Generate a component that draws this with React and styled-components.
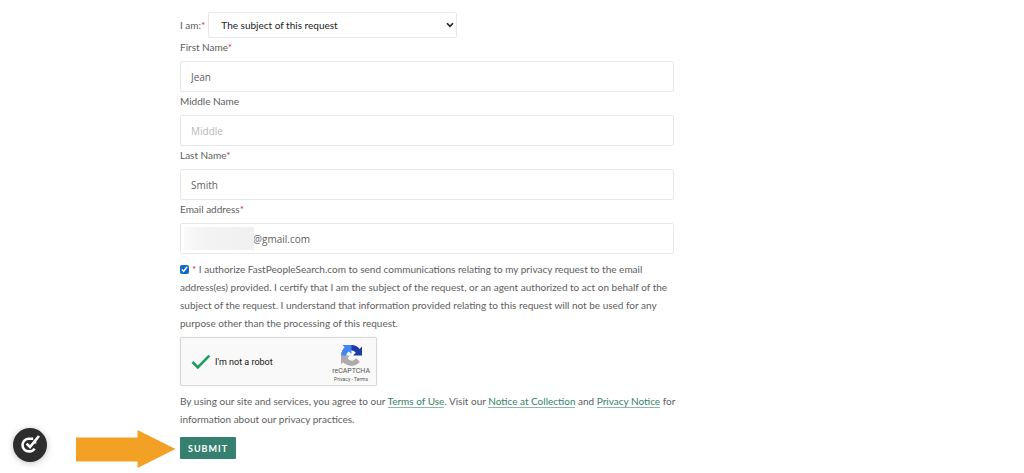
import React from 'react';
import styled, { createGlobalStyle } from 'styled-components';

const App = () => (
  <>
    <GlobalStyle />
    <Page>
      <Form onSubmit={(e) => e.preventDefault()}>
        <SelectRow>
          <label htmlFor="requester">
            I am:<Required>*</Required>
          </label>
          <SelectWrapper>
            <Select id="requester" defaultValue="subject">
              <option value="subject">The subject of this request</option>
              <option value="agent">An authorized agent</option>
            </Select>
            <Chevron viewBox="0 0 8 6" aria-hidden="true">
              <path d="M1 1.2 L4 4.3 L7 1.2" fill="none" stroke="#222" strokeWidth="1.6" />
            </Chevron>
          </SelectWrapper>
        </SelectRow>

        <Field id="first" label="First Name" required defaultValue="Jean" />
        <Field id="middle" label="Middle Name" placeholder="Middle" />
        <Field id="last" label="Last Name" required defaultValue="Smith" />
        <Field id="email" label="Email address" required defaultValue="@gmail.com" masked />

        <Consent htmlFor="consent">
          <Checkbox id="consent" type="checkbox" defaultChecked />
          <Required>*</Required> I authorize FastPeopleSearch.com to send communications relating to my privacy request to the email
          address(es) provided. I certify that I am the subject of the request, or an agent authorized to act on behalf of the
          subject of the request. I understand that information provided relating to this request will not be used for any
          purpose other than the processing of this request.
        </Consent>

        <Captcha>
          <Tick viewBox="0 0 20 16" aria-hidden="true">
            <path d="M1.5 8 L6.8 13.5 L18.3 1.7" fill="none" stroke="#1c9c60" strokeWidth="2.6" />
          </Tick>
          <CaptchaText>I'm not a robot</CaptchaText>
          <CaptchaBrand>
            <CaptchaLogo />
            <BrandName>reCAPTCHA</BrandName>
            <BrandLinks>
              <a href="#privacy">Privacy</a> - <a href="#terms">Terms</a>
            </BrandLinks>
          </CaptchaBrand>
        </Captcha>

        <Legal>
          By using our site and services, you agree to our <TextLink href="#terms-of-use">Terms of Use</TextLink>. Visit our{' '}
          <TextLink href="#notice">Notice at Collection</TextLink> and <TextLink href="#privacy-notice">Privacy Notice</TextLink> for
          information about our privacy practices.
        </Legal>

        <SubmitRow>
          <Arrow viewBox="0 0 100 38" aria-hidden="true">
            <path d="M0 7.5 H61.5 V0 L99.5 19 L61.5 38 V31.5 H0 Z" fill="#f2a124" />
          </Arrow>
          <SubmitButton type="submit">SUBMIT</SubmitButton>
        </SubmitRow>
      </Form>
    </Page>
    <ConsentBadge type="button" aria-label="Privacy preferences">
      <svg width="22" height="22" viewBox="0 0 22 22" fill="none" stroke="#fff" strokeWidth="2.6">
        <path d="M14.2 4.8 H9.8 A6.3 6.3 0 0 0 9.8 17.4 H10.6 A6 6 0 0 0 15.6 14.6" />
        <path d="M7.6 9.6 L11 13 L20 2" />
        <path d="M16 6.5 V9.6" />
      </svg>
    </ConsentBadge>
  </>
);

const Field = ({ id, label, required, masked, ...rest }) => (
  <FieldWrapper>
    <FieldLabel htmlFor={id}>
      {label}
      {required && <Required>*</Required>}
    </FieldLabel>
    <InputWrapper>
      <Input id={id} type="text" $masked={masked} {...rest} />
      {masked && <Mask />}
    </InputWrapper>
  </FieldWrapper>
);

const CaptchaLogo = () => (
  <svg width="21" height="21" viewBox="0 0 64 64" aria-hidden="true">
    <path
      fill="#1c3aa9"
      d="M64 31.955l-.033-1.37V4.687l-7.16 7.16C50.948 4.674 42.033.093 32.05.093c-10.4 0-19.622 4.96-25.458 12.64l11.736 11.86a15.55 15.55 0 0 1 4.754-5.334c2.05-1.6 4.952-2.906 8.968-2.906.485 0 .86.057 1.135.163 4.976.393 9.288 3.14 11.828 7.124l-8.307 8.307L64 31.953z"
    />
    <path
      fill="#4285f4"
      d="M31.862.094l-1.37.033H4.594l7.16 7.16C4.58 13.147 0 22.06 0 32.046c0 10.4 4.96 19.622 12.64 25.458L24.5 45.768a15.55 15.55 0 0 1-5.334-4.754c-1.6-2.05-2.906-4.952-2.906-8.968 0-.485.057-.86.163-1.135.393-4.976 3.14-9.288 7.124-11.828l8.307 8.307L31.86.095z"
    />
    <path
      fill="#ababab"
      d="M.001 32.045l.033 1.37v25.898l7.16-7.16c5.86 7.173 14.774 11.754 24.76 11.754 10.4 0 19.622-4.96 25.458-12.64l-11.736-11.86a15.55 15.55 0 0 1-4.754 5.334c-2.05 1.6-4.952 2.906-8.968 2.906-.485 0-.86-.057-1.135-.163-4.976-.393-9.288-3.14-11.828-7.124l8.307-8.307c-10.522.04-22.4.066-27.295-.005z"
    />
  </svg>
);

export default App;

// Styled Components
const GlobalStyle = createGlobalStyle`
  * {
    box-sizing: border-box;
  }

  body {
    margin: 0;
    background: #fff;
    color: #606060;
    font-family: Lato, 'Open Sans', sans-serif;
    font-size: 10px;
    line-height: 18px;
  }
`;

const Page = styled.main`
  padding: 12px 20px 12px 180px;

  @media (max-width: 768px) {
    padding-left: 20px;
  }
`;

const Form = styled.form`
  max-width: 494px;
`;

const Required = styled.span`
  color: #d0303a;
`;

const SelectRow = styled.div`
  display: flex;
  align-items: center;
  gap: 3px;
`;

const SelectWrapper = styled.div`
  position: relative;
  flex: 0 1 249px;
`;

const Select = styled.select`
  appearance: none;
  display: block;
  width: 100%;
  height: 26px;
  padding: 0 20px 0 12px;
  border: 1px solid #e8e8e8;
  border-radius: 2px;
  background: #fff;
  color: #222;
  font-family: inherit;
  font-size: 10px;
`;

const Chevron = styled.svg`
  position: absolute;
  top: 10px;
  right: 3px;
  width: 8px;
  height: 6px;
  pointer-events: none;
`;

const FieldWrapper = styled.div`
  display: flex;
  flex-direction: column;
`;

const FieldLabel = styled.label`
  height: 23px;
  line-height: 18px;
`;

const InputWrapper = styled.div`
  position: relative;
`;

const Input = styled.input`
  display: block;
  width: 100%;
  height: 31px;
  padding: 1px 10px 0 ${(props) => (props.$masked ? '72px' : '10px')};
  border: 1px solid #e8e8e8;
  border-radius: 2px;
  background: #fff;
  color: #606060;
  font-family: 'Open Sans', 'Noto Sans', sans-serif;
  font-size: 10px;

  &::placeholder {
    color: #b8b8b8;
    opacity: 1;
  }
`;

const Mask = styled.span`
  position: absolute;
  top: 4px;
  left: 4px;
  width: 70px;
  height: 23px;
  background: linear-gradient(90deg, #fbfbfb, #f3f3f3 30%, #f0f0f0);
`;

const Consent = styled.label`
  display: block;
  margin-top: 6px;
`;

const Checkbox = styled.input`
  width: 9px;
  height: 9px;
  margin: 0 3px 0 0;
  vertical-align: -1px;
  accent-color: #0b6bcb;
`;

const Captcha = styled.div`
  display: flex;
  align-items: center;
  width: 197px;
  height: 49px;
  margin-top: 5px;
  padding: 0 6px 0 10px;
  border: 1px solid #d8d8d8;
  border-radius: 2px;
  background: #f9f9f9;
  box-shadow: 0 0 2px rgba(0, 0, 0, 0.1);
  color: #111;
  font-family: Roboto, sans-serif;
`;

const Tick = styled.svg`
  width: 20px;
  height: 16px;
  margin-right: 4px;
`;

const CaptchaText = styled.span`
  flex: 1;
  font-size: 9px;
`;

const CaptchaBrand = styled.div`
  display: flex;
  flex-direction: column;
  align-items: center;
  padding-top: 4px;
  color: #555;
`;

const BrandName = styled.span`
  font-size: 7px;
  line-height: 10px;
`;

const BrandLinks = styled.span`
  font-size: 5px;
  line-height: 6px;

  a {
    color: inherit;
    text-decoration: none;
  }
`;

const Legal = styled.p`
  margin: 6px -8px 0 0;
`;

const TextLink = styled.a`
  border-bottom: 1px solid #8fb8aa;
  color: #38806c;
  text-decoration: none;
`;

const SubmitRow = styled.div`
  position: relative;
  margin-top: 9px;
`;

const Arrow = styled.svg`
  position: absolute;
  top: -7px;
  right: 100%;
  width: 100px;
  height: 38px;
  margin-right: 4px;
`;

const SubmitButton = styled.button`
  display: block;
  height: 22px;
  padding: 0 8px;
  border: none;
  border-radius: 1px;
  background: #36806f;
  color: #fff;
  font-family: Lato, sans-serif;
  font-size: 9px;
  font-weight: 700;
  letter-spacing: 1px;
  cursor: pointer;
`;

const ConsentBadge = styled.button`
  position: fixed;
  bottom: 11px;
  left: 13px;
  display: flex;
  align-items: center;
  justify-content: center;
  width: 34px;
  height: 34px;
  padding: 0;
  border: none;
  border-radius: 50%;
  background: #2d2d2d;
  box-shadow: 0 1px 6px rgba(0, 0, 0, 0.25);
  cursor: pointer;
`;
